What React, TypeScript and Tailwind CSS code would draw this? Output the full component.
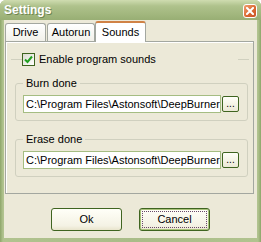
import React from "react";

const font = { fontFamily: '"Liberation Sans", Arial, sans-serif' };

function XpButton({ label, focused }: { label: string; focused?: boolean }) {
  return (
    <button
      type="button"
      className={`w-[71px] h-[23px] rounded-[3px] border text-[11px] text-black bg-[linear-gradient(#fffff8,#f4f2e4_80%,#e8e4cc)] flex items-center justify-center ${
        focused ? "border-[#3f6420] shadow-[inset_0_0_0_1px_#a9c27a]" : "border-[#3f6420]"
      }`}
    >
      <span
        className={`w-[63px] h-[15px] flex items-center justify-center ${
          focused ? "outline outline-1 outline-dotted outline-[#6b4a6b]" : ""
        }`}
      >
        {label}
      </span>
    </button>
  );
}

function PathRow({ value }: { value: string }) {
  return (
    <div className="flex items-start gap-[1px]">
      <div className="w-[198px] h-[18px] border border-[#a5bd82] bg-white pl-[2px] text-[11px] leading-[16px] text-black whitespace-nowrap overflow-hidden">
        {value}
      </div>
      <button
        type="button"
        className="w-[17px] h-[16px] mt-[1px] rounded-[2px] border border-[#3f6420] bg-[linear-gradient(#fffff8,#ece9d6)] text-[10px] leading-[10px] text-black flex items-end justify-center pb-[2px]"
      >
        ...
      </button>
    </div>
  );
}

function Group({ title, children }: { title: string; children: React.ReactNode }) {
  return (
    <fieldset className="w-[233px] border border-[#d0d0bf] rounded-[3px] pl-[7px] pb-[7px] pt-[5px] m-0">
      <legend className="px-[3px] text-[11px] leading-[13px] text-black">{title}</legend>
      {children}
    </fieldset>
  );
}

export default function App() {
  return (
    <div
      className="w-[261px] h-[242px] flex flex-col bg-[linear-gradient(90deg,#8ea66a,#b1c38f_3px,#a9bc88_50%,#b1c38f_calc(100%-3px),#8ea66a)] rounded-t-[6px] overflow-hidden"
      style={font}
    >
      {/* Title bar */}
      <div className="h-[20px] flex items-start justify-between pl-[4px] pr-[4px] bg-[linear-gradient(#cfdcb0,#afc28c_30%,#a2b77e_70%,#98ae74)]">
        <span className="mt-[3px] text-white font-bold text-[12px] leading-[14px] [text-shadow:1px_1px_0_#6f8651]">Settings</span>
        <div className="mt-[4px] w-[14px] h-[14px] rounded-[3px] border border-white bg-[linear-gradient(135deg,#f0a070,#d9662f_60%,#c9532a)] flex items-center justify-center">
          <svg width="8" height="8" viewBox="0 0 8 8">
            <path d="M1 1L7 7M7 1L1 7" stroke="#fff" strokeWidth="2" strokeLinecap="square" />
          </svg>
        </div>
      </div>

      {/* Body */}
      <div className="flex-1 mx-[4px] mb-[4px] bg-[#ece9d8] flex flex-col">
        {/* Tabs */}
        <div className="flex items-end pl-[1px] h-[21px]">
          <div className="w-[41px] h-[18px] border border-b-0 border-[#a3a7a0] rounded-t-[3px] bg-[linear-gradient(#ffffff,#f2f1ea)] text-[11px] text-black flex items-center justify-center">
            Drive
          </div>
          <div className="w-[48px] h-[18px] ml-[1px] border border-b-0 border-[#a3a7a0] rounded-t-[3px] bg-[linear-gradient(#ffffff,#f2f1ea)] text-[11px] text-black flex items-center justify-center">
            Autorun
          </div>
          <div className="relative z-10 w-[51px] h-[21px] -mb-px border border-b-0 border-[#a3a7a0] border-t-[2px] border-t-[#d08245] rounded-t-[3px] bg-white text-[11px] text-black flex items-center justify-center pb-[1px]">
            Sounds
          </div>
        </div>

        {/* Panel */}
        <div className="ml-[1px] w-[249px] h-[153px] border border-[#a3a7a0] shadow-[inset_1px_1px_0_#ffffff] bg-[#ece9d8] flex flex-col">
          {/* Checkbox header line */}
          <div className="flex items-center mt-[11px] ml-[5px] h-[13px]">
            <div className="w-[11px] h-px bg-[#d0d0bf]" />
            <label className="w-[216px] flex items-center gap-[4px] text-[11px] text-black">
              <span className="w-[13px] h-[13px] border border-[#3f6420] bg-[linear-gradient(135deg,#dcdcd0,#ffffff)] flex items-center justify-center">
                <svg width="9" height="9" viewBox="0 0 9 9">
                  <path d="M1 4.5L3.5 7L8 1.5" stroke="#21a121" strokeWidth="2" fill="none" />
                </svg>
              </span>
              Enable program sounds
            </label>
            <div className="w-[11px] h-px bg-[#d0d0bf]" />
          </div>

          <div className="ml-[9px] mt-[11px] flex flex-col gap-[12px]">
            <Group title="Burn done">
              <PathRow value="C:\Program Files\Astonsoft\DeepBurner" />
            </Group>
            <Group title="Erase done">
              <PathRow value="C:\Program Files\Astonsoft\DeepBurner" />
            </Group>
          </div>
        </div>

        {/* Buttons */}
        <div className="flex justify-center gap-[17px] mt-[14px]">
          <XpButton label="Ok" />
          <XpButton label="Cancel" focused />
        </div>
      </div>
    </div>
  );
}
